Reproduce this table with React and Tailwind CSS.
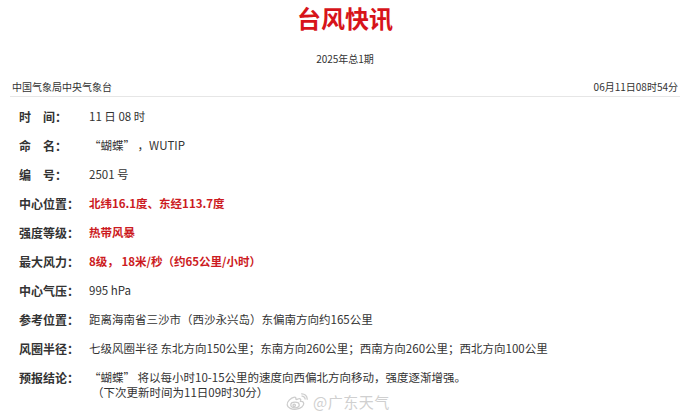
import React from 'react';

const rows = [
  { label: '时　间：', value: '11 日 08 时' },
  { label: '命　名：', value: '“蝴蝶” ，WUTIP' },
  { label: '编　号：', value: '2501 号' },
  { label: '中心位置：', value: '北纬16.1度、东经113.7度', red: true },
  { label: '强度等级：', value: '热带风暴', red: true },
  { label: '最大风力：', value: '8级， 18米/秒（约65公里/小时）', red: true },
  { label: '中心气压：', value: '995 hPa' },
  { label: '参考位置：', value: '距离海南省三沙市（西沙永兴岛）东偏南方向约165公里' },
  { label: '风圈半径：', value: '七级风圈半径 东北方向150公里；东南方向260公里；西南方向260公里；西北方向100公里' },
];

const WeiboMark = () => (
  <svg width="24" height="18" viewBox="0 0 24 18" fill="none" stroke="#cdcdcd" strokeWidth="1.3">
    <path d="M9.5 4.2C5.6 5 1.8 8.6 2.2 11.8c.4 3.2 4.6 5 9.2 4.4 4.6-.6 7.6-3.2 7.3-5.8-.2-1.6-1.7-2.3-3.2-2 .9-2.2-.3-3.3-2.6-2.4-1.2.5-2 .9-2-.2.1-1.1-.6-1.8-1.4-1.6z" />
    <ellipse cx="10" cy="12" rx="4.2" ry="2.8" />
    <circle cx="9.2" cy="12.3" r="1.2" />
    <path d="M16.5 3.2c2-.3 3.8 1.2 3.7 3.3" />
    <path d="M16.2 0.9c3.4-.4 6.3 2.3 6 5.8" />
  </svg>
);

export default function App() {
  return (
    <div
      className="relative w-[690px] h-[415px] bg-white overflow-hidden text-[#333]"
      style={{ fontFamily: '"Microsoft YaHei", "Noto Sans CJK SC", "Noto Sans", sans-serif' }}
    >
      {/* Title */}
      <div className="h-[36px] flex items-center justify-center">
        <h1 className="text-[24px] leading-[28px] font-bold text-[#d7141a]">台风快讯</h1>
      </div>
      <div className="mt-[16px] h-[14px] flex items-center justify-center text-[10px] leading-[14px] text-[#333]">
        2025年总1期
      </div>

      {/* Header row */}
      <div className="mx-[10px] mt-[14px] pb-[2px] border-b border-[#e6e6e6]">
        <div className="h-[14px] px-[2px] flex items-center justify-between text-[10px] leading-[14px] text-[#333]">
          <span>中国气象局中央气象台</span>
          <span>06月11日08时54分</span>
        </div>
      </div>

      {/* Detail rows */}
      <div className="pt-[5px] pl-[19px]">
        {rows.map((r) => (
          <div key={r.label} className="h-[29px] flex items-start pt-[7px]">
            <div className="w-[70px] shrink-0 text-[12px] leading-[15px] font-bold text-[#333]">{r.label}</div>
            <div
              className={
                r.red
                  ? 'text-[11.5px] leading-[15px] font-bold text-[#cc1b22]'
                  : 'text-[11.5px] leading-[15px] text-[#333]'
              }
            >
              {r.value}
            </div>
          </div>
        ))}
        <div className="flex items-start pt-[7px]">
          <div className="w-[70px] shrink-0 text-[12px] leading-[15px] font-bold text-[#333]">预报结论：</div>
          <div className="text-[11.5px] leading-[15px] text-[#333]">
            <div>“蝴蝶” 将以每小时10-15公里的速度向西偏北方向移动，强度逐渐增强。</div>
            <div className="pl-[3px]">（下次更新时间为11日09时30分）</div>
          </div>
        </div>
      </div>

      {/* Watermark */}
      <div className="absolute left-[285px] top-[393px] flex items-center gap-[4px] text-[#d0d0d0]">
        <WeiboMark />
        <span className="text-[15px] leading-[18px] tracking-[0.5px]">@广东天气</span>
      </div>
    </div>
  );
}
